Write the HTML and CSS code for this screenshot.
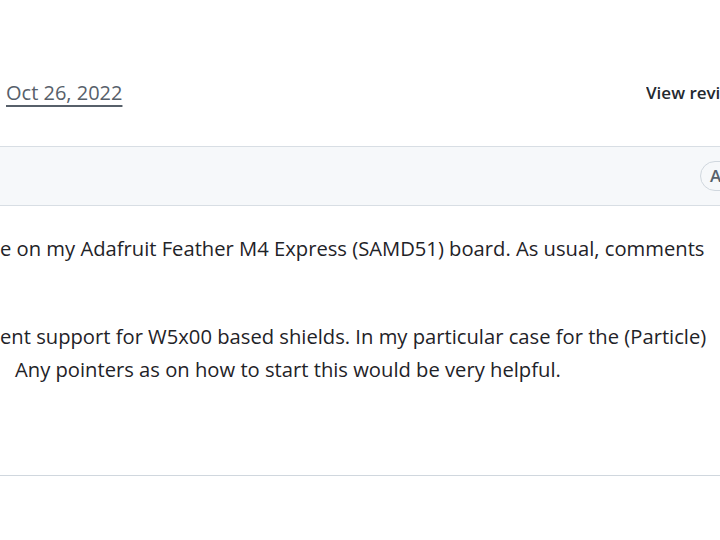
FILE: index.html
```html
<!DOCTYPE html>
<html lang="en">
<head>
<meta charset="utf-8">
<title>Discussion</title>
<link rel="stylesheet" href="styles.css">
</head>
<body>
<div class="page">
  <div class="meta">
    <a class="date" href="#">Oct 26, 2022</a>
    <span class="revisions">View revisions</span>
  </div>
  <div class="band">
    <span class="badge">Author</span>
  </div>
  <div class="body">
    <p class="p1"><span class="line">e on my Adafruit Feather M4 Express (SAMD51) board. As usual, comments</span></p>
    <p class="p2">
      <span class="line">ent support for W5x00 based shields. In my particular case for the (Particle)</span>
      <span class="line indent">Any pointers as on how to start this would be very helpful.</span>
    </p>
  </div>
  <div class="rule"></div>
</div>
</body>
</html>
```
FILE: styles.css
```css
html, body {
  margin: 0;
  padding: 0;
  background: #ffffff;
  overflow: hidden;
}
.page {
  width: 720px;
  height: 540px;
  overflow: hidden;
  font-family: "Open Sans", "Noto Sans", sans-serif;
  color: #1f2328;
}
.meta {
  margin-top: 72px;
  height: 40px;
  display: flex;
  align-items: center;
  white-space: nowrap;
}
.date {
  margin-left: 6px;
  font-size: 20px;
  color: #57606a;
  text-decoration: underline;
  text-decoration-thickness: 2px;
  text-underline-offset: 5px;
}
.revisions {
  margin-left: auto;
  width: 74px;
  overflow: hidden;
  font-size: 17px;
  font-weight: 600;
  color: #24292f;
}
.band {
  margin-top: 34px;
  height: 58px;
  background: #f6f8fa;
  border-top: 1px solid #d8dee4;
  border-bottom: 1px solid #d8dee4;
  display: flex;
  align-items: center;
  padding-left: 700px;
  white-space: nowrap;
}
.badge {
  flex-shrink: 0;
  height: 28px;
  line-height: 28px;
  padding: 0 9px;
  border: 1px solid #d0d7de;
  border-radius: 16px;
  font-size: 17px;
  font-weight: 600;
  color: #57606a;
}
.body {
  padding-top: 26px;
  font-size: 20.2px;
  line-height: 33px;
  white-space: nowrap;
}
.body p {
  margin: 0;
}
.line {
  display: block;
}
.indent {
  padding-left: 15px;
}
.p1 {
  margin-bottom: 55px !important;
}
.rule {
  margin-top: 89px;
  height: 1px;
  background: #d0d7de;
}
```
